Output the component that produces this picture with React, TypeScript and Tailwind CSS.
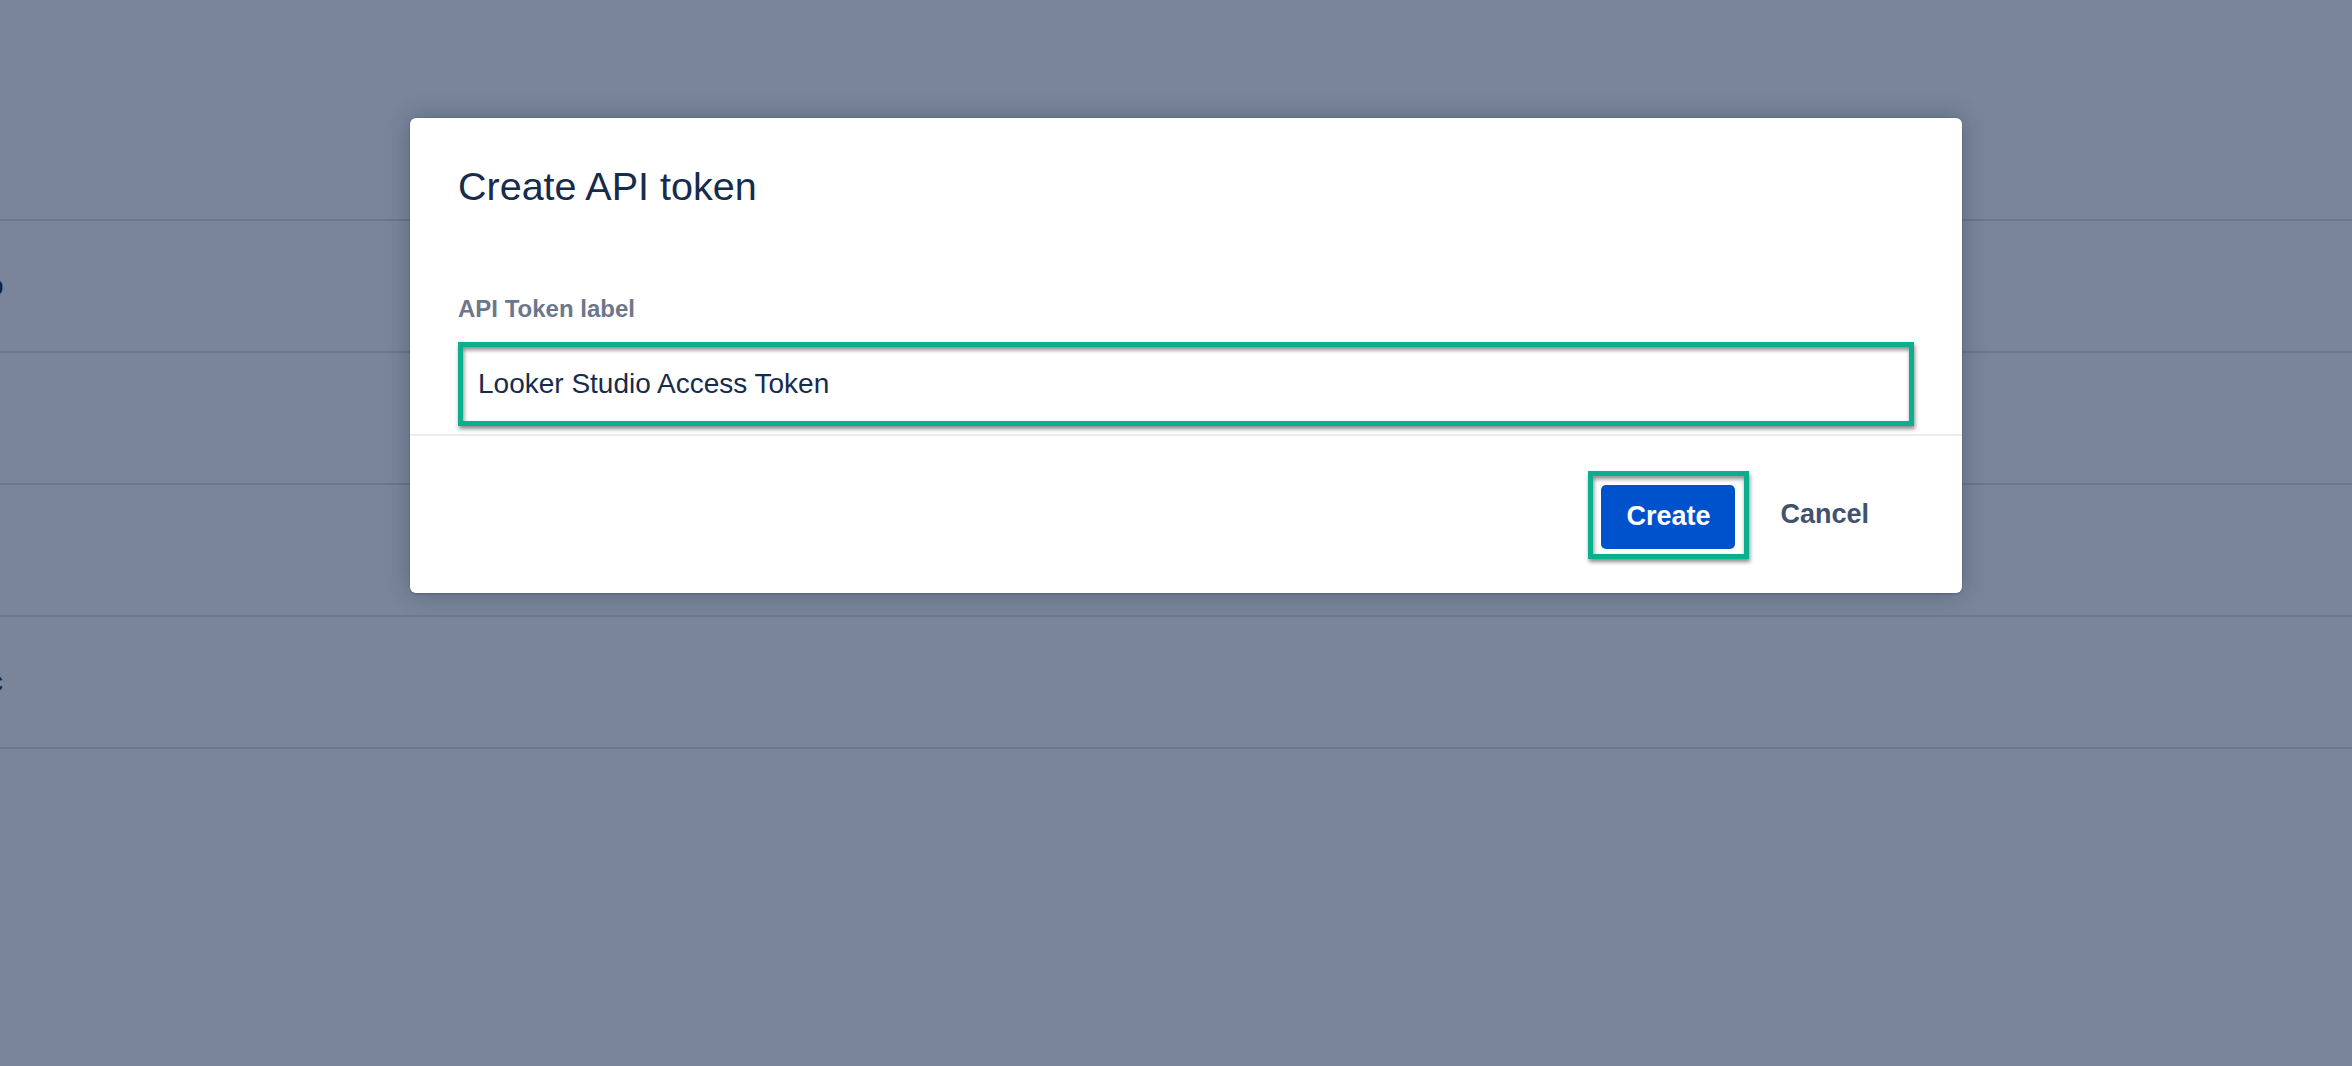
import React from 'react';

const font = { fontFamily: '"Liberation Sans", Arial, sans-serif' };

// page rows that sit behind the dimmed overlay
const BackgroundPage = () => {
  return (
    <div className="flex flex-col bg-white text-[28px] text-[#172b4d]">
      <div className="h-[221px] border-b-2 border-[#dfe1e6]" />
      <div className="flex h-[132px] items-center overflow-hidden border-b-2 border-[#dfe1e6]">
        <span className="-ml-[12px]">o</span>
      </div>
      <div className="h-[132px] border-b-2 border-[#dfe1e6]" />
      <div className="h-[132px] border-b-2 border-[#dfe1e6]" />
      <div className="flex h-[132px] items-center overflow-hidden border-b-2 border-[#dfe1e6]">
        <span className="-ml-[11px]">c</span>
      </div>
      <div className="h-[400px]" />
    </div>
  );
};

const markup =
  'border-[5px] border-[#0caf8d] shadow-[1px_3px_4px_rgba(0,0,0,0.45),inset_1px_3px_4px_rgba(0,0,0,0.45)]';

const Modal = () => {
  return (
    <div className="w-[1552px] overflow-hidden rounded-[6px] bg-white shadow-[0_0_0_1px_rgba(9,30,66,0.08),0_2px_1px_rgba(9,30,66,0.08),0_0_24px_rgba(9,30,66,0.3)]">
      <div className="px-[48px] pt-[44px]">
        <h1 className="text-[39.5px] leading-[48px] font-normal text-[#172b4d]">Create API token</h1>
        <label className="mt-[83px] block text-[24px] leading-[32px] font-bold text-[#6b778c]">
          API Token label
        </label>
        <div className={`mt-[17px] flex h-[84px] items-center bg-white pl-[15px] ${markup}`}>
          <span className="text-[28px] text-[#172b4d]">Looker Studio Access Token</span>
        </div>
        <div className="h-[8px]" />
      </div>
      <div className="h-[2px] bg-[#ebecf0]" />
      <div className="flex h-[157px] items-center justify-end pr-[93px]">
        <div className={`pt-[9px] pr-[9px] pb-[5px] pl-[8px] ${markup}`}>
          <button className="flex h-[64px] w-[134px] items-center justify-center rounded-[5px] bg-[#0052cc] text-[27px] font-bold text-white">
            Create
          </button>
        </div>
        <button className="ml-[31px] text-[27px] font-bold text-[#42526e]">Cancel</button>
      </div>
    </div>
  );
};

export default function App() {
  return (
    <div className="relative h-[1066px] w-full overflow-hidden" style={font}>
      <BackgroundPage />
      <div className="absolute inset-0 flex justify-center bg-[rgba(9,30,66,0.54)] pt-[118px] pl-[20px]">
        <div>
          <Modal />
        </div>
      </div>
    </div>
  );
}
